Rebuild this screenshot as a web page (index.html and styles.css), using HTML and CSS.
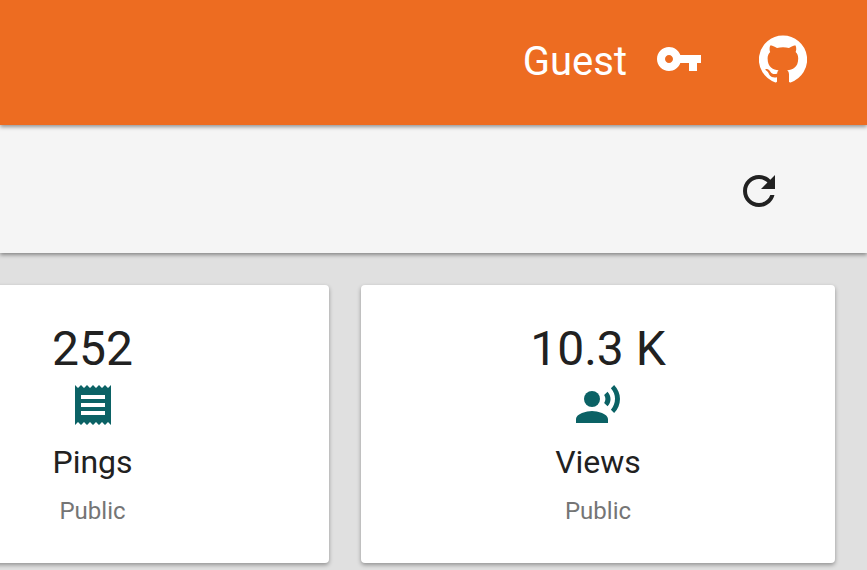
FILE: index.html
```html
<!DOCTYPE html>
<html>
  <head>
    <title>Dashboard</title>
    <link rel="stylesheet" href="styles.css">
  </head>
  <body>
    <header class="app-bar">
      <span class="user-name">Guest</span>
      <svg class="icon key-icon" viewBox="0 0 24 24"><path d="M12.65 10C11.83 7.67 9.61 6 7 6c-3.31 0-6 2.69-6 6s2.69 6 6 6c2.61 0 4.83-1.67 5.65-4H17v4h4v-4h2v-4H12.65zM7 14c-1.1 0-2-.9-2-2s.9-2 2-2 2 .9 2 2-.9 2-2 2z"/></svg>
      <svg class="icon github-icon" viewBox="0 0 24 24"><path d="M12 .3a12 12 0 0 0-3.8 23.4c.6.1.8-.3.8-.6v-2c-3.3.7-4-1.6-4-1.6-.6-1.4-1.4-1.8-1.4-1.8-1-.7.1-.7.1-.7 1.2 0 1.9 1.2 1.9 1.2 1 1.8 2.8 1.3 3.5 1 0-.8.4-1.3.7-1.6-2.7-.3-5.5-1.3-5.5-6 0-1.2.5-2.3 1.3-3.1-.2-.4-.6-1.6 0-3.2 0 0 1-.3 3.4 1.2a11.5 11.5 0 0 1 6 0c2.3-1.5 3.3-1.2 3.3-1.2.6 1.6.2 2.8 0 3.2.9.8 1.3 1.9 1.3 3.2 0 4.6-2.8 5.6-5.5 5.9.5.4.9 1 .9 2.2v3.3c0 .3.1.7.8.6A12 12 0 0 0 12 .3"/></svg>
    </header>

    <div class="toolbar">
      <svg class="icon refresh-icon" viewBox="0 0 24 24"><path d="M17.65 6.35C16.2 4.9 14.21 4 12 4c-4.42 0-7.99 3.58-7.99 8s3.57 8 7.99 8c3.73 0 6.84-2.55 7.73-6h-2.08c-.82 2.33-3.04 4-5.65 4-3.31 0-6-2.69-6-6s2.69-6 6-6c1.66 0 3.14.69 4.22 1.78L13 11h7V4l-2.35 2.35z"/></svg>
    </div>

    <main class="cards">
      <div class="card">
        <div class="card-value">252</div>
        <svg class="icon card-icon" viewBox="0 0 24 24"><path d="M18 17H6v-2h12v2zm0-4H6v-2h12v2zm0-4H6V7h12v2zM3 22l1.5-1.5L6 22l1.5-1.5L9 22l1.5-1.5L12 22l1.5-1.5L15 22l1.5-1.5L18 22l1.5-1.5L21 22V2l-1.5 1.5L18 2l-1.5 1.5L15 2l-1.5 1.5L12 2l-1.5 1.5L9 2 7.5 3.5 6 2 4.5 3.5 3 2v20z"/></svg>
        <div class="card-title">Pings</div>
        <div class="card-label">Public</div>
      </div>
      <div class="card">
        <div class="card-value">10.3 K</div>
        <svg class="icon card-icon" viewBox="0 0 24 24"><circle cx="9" cy="9" r="4"/><path d="M9 15c-2.67 0-8 1.34-8 4v2h16v-2c0-2.66-5.33-4-8-4zm7.76-9.64l-1.68 1.69c.84 1.18.84 2.71 0 3.89l1.68 1.69c2.02-2.02 2.02-5.07 0-7.27zM20.07 2l-1.63 1.63c2.77 3.02 2.77 7.56 0 10.74L20.07 16c3.9-3.89 3.91-9.95 0-14z"/></svg>
        <div class="card-title">Views</div>
        <div class="card-label">Public</div>
      </div>
    </main>
  </body>
</html>
```

FILE: styles.css
```css
html,
body {
  height: 100%;
}

body {
  margin: 0;
  overflow: hidden;
  font-family: Roboto, "Liberation Sans", sans-serif;
  background-color: #e0e0e0;
  color: #212121;
}

.icon {
  display: block;
  width: 48px;
  height: 48px;
  fill: currentColor;
  flex: none;
}

.app-bar {
  position: relative;
  z-index: 2;
  display: flex;
  align-items: center;
  justify-content: flex-end;
  box-sizing: border-box;
  height: 125px;
  padding-right: 60px;
  padding-bottom: 7px;
  background-color: #ed6c21;
  color: #fff;
  box-shadow: 0 2px 4px rgba(0, 0, 0, 0.4);
}

.user-name {
  font-size: 40px;
  margin-right: 28px;
  position: relative;
  top: 2px;
}

.key-icon {
  margin-right: 56px;
}

.toolbar {
  position: relative;
  z-index: 1;
  display: flex;
  align-items: center;
  justify-content: flex-end;
  height: 128px;
  padding-right: 84px;
  background-color: #f5f5f5;
  box-shadow: 0 2px 4px rgba(0, 0, 0, 0.4);
}

.refresh-icon {
  margin-top: 4px;
}

.cards {
  display: grid;
  grid-template-columns: 473px 474px;
  gap: 32px;
  margin-left: -144px;
  padding-top: 32px;
}

.card {
  display: flex;
  flex-direction: column;
  align-items: center;
  height: 278px;
  padding-top: 36px;
  box-sizing: border-box;
  background-color: #fff;
  border-radius: 4px;
  box-shadow: 0 2px 4px rgba(0, 0, 0, 0.35);
}

.card-value {
  font-size: 48px;
  line-height: 56px;
}

.card-icon {
  margin-top: 4px;
  color: #0b6265;
}

.card-title {
  font-size: 32px;
  line-height: 40px;
  margin-top: 13px;
}

.card-label {
  font-size: 24px;
  line-height: 32px;
  margin-top: 13px;
  color: #757575;
}
```
